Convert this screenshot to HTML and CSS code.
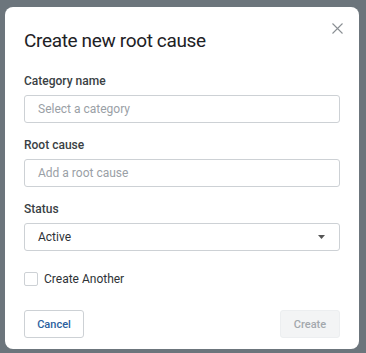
FILE: index.html
```html
<!DOCTYPE html>
<html>
<head>
<meta charset="utf-8">
<link rel="stylesheet" href="styles.css">
</head>
<body>
<div class="modal">
  <div class="header">
    <h1 class="title">Create new root cause</h1>
    <button class="close" aria-label="Close">
      <svg width="11" height="11" viewBox="0 0 11 11"><path d="M0.5 0.5 L10.5 10.5 M10.5 0.5 L0.5 10.5" stroke="#8a8f94" stroke-width="1.1" fill="none"/></svg>
    </button>
  </div>
  <div class="field">
    <label class="label">Category name</label>
    <div class="input placeholder">Select a category</div>
  </div>
  <div class="field">
    <label class="label">Root cause</label>
    <div class="input placeholder">Add a root cause</div>
  </div>
  <div class="field">
    <label class="label">Status</label>
    <div class="input select">
      <span>Active</span>
      <svg width="7" height="4" viewBox="0 0 7 4"><path d="M0 0 H7 L3.5 4 Z" fill="#555"/></svg>
    </div>
  </div>
  <label class="check">
    <span class="box"></span>
    <span>Create Another</span>
  </label>
  <div class="footer">
    <button class="btn cancel">Cancel</button>
    <button class="btn create">Create</button>
  </div>
</div>
</body>
</html>
```
FILE: styles.css
```css
html, body {
  margin: 0;
  padding: 0;
}
body {
  background: #6c757c;
  width: 366px;
  height: 353px;
  overflow: hidden;
  font-family: Roboto, "Noto Sans", sans-serif;
  padding-top: 7px;
  padding-left: 5px;
  box-sizing: border-box;
}
.modal {
  width: 354px;
  height: 342px;
  box-sizing: border-box;
  background: #fff;
  border-radius: 8px;
  padding: 20px 19px 11px 19px;
  display: flex;
  flex-direction: column;
}
.header {
  position: relative;
  height: 28px;
  margin-bottom: 18px;
}
.title {
  margin: 0;
  font-size: 19px;
  line-height: 28px;
  font-weight: 400;
  letter-spacing: -0.35px;
  color: #1d2125;
}
.close {
  position: absolute;
  right: -5px;
  top: -7px;
  width: 16px;
  height: 16px;
  padding: 0;
  border: 0;
  background: none;
  display: flex;
  align-items: center;
  justify-content: center;
}
.field {
  display: flex;
  flex-direction: column;
  gap: 6px;
  margin-bottom: 14px;
}
.label {
  font-size: 12px;
  line-height: 16px;
  font-weight: 500;
  color: #3a3f44;
}
.input {
  height: 28px;
  box-sizing: border-box;
  border: 1px solid #cdd1d5;
  border-radius: 3px;
  padding: 0 13px;
  display: flex;
  align-items: center;
  font-size: 12px;
  color: #2d3236;
}
.placeholder {
  color: #9aa0a6;
}
.select {
  justify-content: space-between;
  padding-right: 14px;
}
.check {
  display: flex;
  align-items: center;
  gap: 6px;
  margin-top: 7px;
  font-size: 12px;
  color: #2d3236;
}
.box {
  width: 14px;
  height: 14px;
  box-sizing: border-box;
  border: 1px solid #cdd1d5;
  border-radius: 2px;
  background: #fff;
}
.footer {
  margin-top: auto;
  display: flex;
  justify-content: space-between;
}
.btn {
  height: 28px;
  width: 60px;
  border-radius: 3px;
  font-family: Roboto, "Noto Sans", sans-serif;
  font-size: 11px;
  font-weight: 500;
  padding: 0;
}
.cancel {
  background: #fff;
  border: 1px solid #cdd1d5;
  color: #2c5f9e;
}
.create {
  background: #f3f4f5;
  border: 1px solid #eceef0;
  color: #a3a8ad;
}
```
